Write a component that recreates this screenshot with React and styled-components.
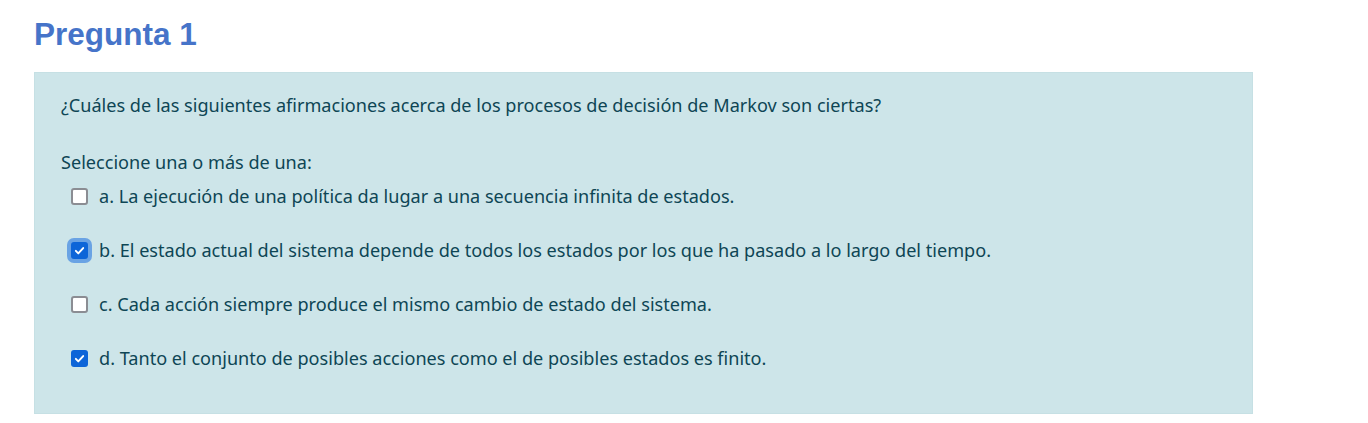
import React from "react";
import styled, { createGlobalStyle } from "styled-components";

const Global = createGlobalStyle`
  html, body { margin: 0; padding: 0; background: #ffffff; }
  body { font-family: "Noto Sans", "Open Sans", sans-serif; }
`;

const Page = styled.div`
  padding: 15px 0 10px 34px;
`;

const Title = styled.h3`
  margin: 0;
  font-family: "Liberation Sans", Arial, sans-serif;
  font-weight: 700;
  font-size: 31.5px;
  line-height: 38px;
  color: #4674c9;
`;

const Formulation = styled.div`
  margin-top: 19px;
  width: 1219px;
  box-sizing: border-box;
  background: #cde5e9;
  border: 1px solid #c6e0e4;
  color: #0e4655;
  padding: 21px 26px 44px;
  font-size: 18.1px;
  line-height: 22px;
`;

const Question = styled.p`
  margin: 0 0 35px;
`;

const Prompt = styled.div`
  margin-bottom: 12px;
`;

const Options = styled.div`
  display: flex;
  flex-direction: column;
  gap: 32px;
  padding-left: 10px;
`;

const Row = styled.label`
  display: flex;
  align-items: center;
  gap: 11px;
`;

const Box = styled.span`
  width: 17px;
  height: 17px;
  box-sizing: border-box;
  border-radius: 3px;
  flex: none;
  display: flex;
  align-items: center;
  justify-content: center;
  background: ${(p) => (p.checked ? "#0d65d8" : "#ffffff")};
  border: ${(p) => (p.checked ? "none" : "2px solid #8b8d93")};
  box-shadow: ${(p) => (p.focused ? "0 0 0 4px #6aa3e4" : "none")};
`;

const options = [
  { key: "a", text: "La ejecución de una política da lugar a una secuencia infinita de estados.", checked: false },
  { key: "b", text: "El estado actual del sistema depende de todos los estados por los que ha pasado a lo largo del tiempo.", checked: true, focused: true },
  { key: "c", text: "Cada acción siempre produce el mismo cambio de estado del sistema.", checked: false },
  { key: "d", text: "Tanto el conjunto de posibles acciones como el de posibles estados es finito.", checked: true },
];

function Check() {
  return (
    <svg width="13" height="13" viewBox="0 0 16 16">
      <path d="M3.5 8.5l3 3 6-6.5" fill="none" stroke="#fff" strokeWidth="2.4" strokeLinecap="round" strokeLinejoin="round" />
    </svg>
  );
}

export default function App() {
  return (
    <Page>
      <Global />
      <Title>Pregunta 1</Title>
      <Formulation>
        <Question>¿Cuáles de las siguientes afirmaciones acerca de los procesos de decisión de Markov son ciertas?</Question>
        <Prompt>Seleccione una o más de una:</Prompt>
        <Options>
          {options.map((o) => (
            <Row key={o.key}>
              <Box checked={o.checked} focused={o.focused}>{o.checked && <Check />}</Box>
              <span>{o.key}. {o.text}</span>
            </Row>
          ))}
        </Options>
      </Formulation>
    </Page>
  );
}
